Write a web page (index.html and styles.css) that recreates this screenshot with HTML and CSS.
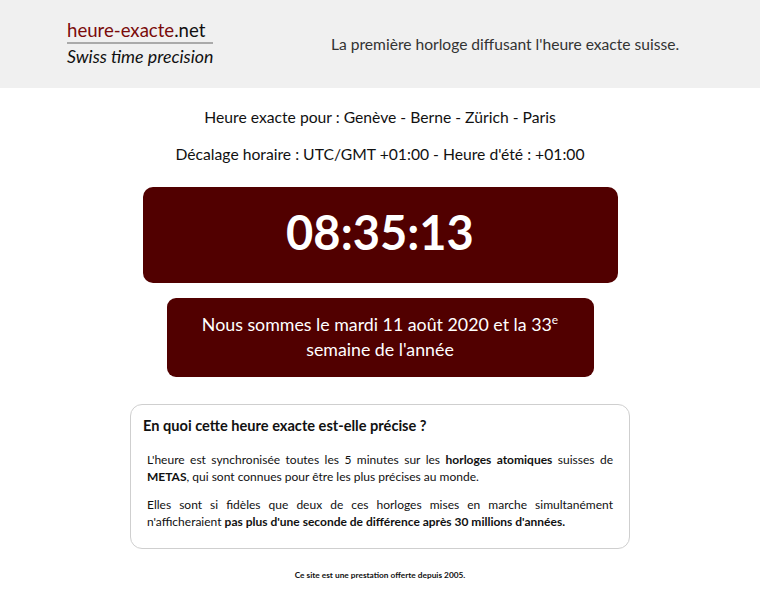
FILE: index.html
```html
<!DOCTYPE html>
<html lang="fr">
<head>
<meta charset="utf-8">
<title>heure-exacte.net</title>
<link rel="stylesheet" href="styles.css">
</head>
<body>
<header class="top">
  <div class="logo">
    <div class="logo-name"><span class="red">heure-exacte</span>.net</div>
    <div class="logo-sub">Swiss time precision</div>
  </div>
  <div class="tagline">La première horloge diffusant l'heure exacte suisse.</div>
</header>
<main class="main">
  <p class="line1">Heure exacte pour : Genève - Berne - Zürich - Paris</p>
  <p class="line2">Décalage horaire : UTC/GMT +01:00 - Heure d'été : +01:00</p>
  <div class="clock">08:35:13</div>
  <div class="date">Nous sommes le mardi 11 août 2020 et la 33<sup>e</sup><br>semaine de l'année</div>
  <section class="info">
    <h2>En quoi cette heure exacte est-elle précise ?</h2>
    <p>L'heure est synchronisée toutes les 5 minutes sur les <b>horloges atomiques</b> suisses de <b>METAS</b>, qui sont connues pour être les plus précises au monde.</p>
    <p>Elles sont si fidèles que deux de ces horloges mises en marche simultanément n'afficheraient <b>pas plus d'une seconde de différence après 30 millions d'années.</b></p>
  </section>
  <footer class="foot">Ce site est une prestation offerte depuis 2005.</footer>
</main>
</body>
</html>
```
FILE: styles.css
```css
html, body { margin: 0; padding: 0; background: #fff; }
body { font-family: Lato, "Open Sans", sans-serif; color: #111; }
.top {
  background: #f0f0f0;
  height: 88px;
  display: flex;
  align-items: center;
  padding-left: 67px;
  box-sizing: border-box;
}
.logo { width: 146px; margin-top: -2px; }
.logo-name {
  font-size: 18.6px;
  line-height: 22px;
  color: #111;
  padding-bottom: 1px;
  border-bottom: 2px solid #aaa;
  white-space: nowrap;
}
.red { color: #7a0a0a; }
.logo-sub {
  font-size: 17.8px;
  font-style: italic;
  line-height: 24px;
  color: #111;
  white-space: nowrap;
}
.tagline {
  margin-left: 118px;
  font-size: 15.6px;
  color: #333;
}
.main {
  display: flex;
  flex-direction: column;
  align-items: center;
}
.line1, .line2 {
  font-size: 15.7px;
  margin: 0;
  line-height: 22px;
}
.line1 { margin-top: 18px; }
.line2 { margin-top: 15px; }
.clock {
  margin-top: 22px;
  width: 475px;
  height: 96px;
  box-sizing: border-box;
  padding-bottom: 6px;
  background: #510000;
  border-radius: 10px;
  color: #fff;
  font-weight: 700;
  font-size: 47px;
  display: flex;
  align-items: center;
  justify-content: center;
}
.date {
  margin-top: 15px;
  width: 427px;
  height: 79px;
  box-sizing: border-box;
  background: #510000;
  border-radius: 9px;
  color: #fff;
  font-size: 17.8px;
  line-height: 25px;
  text-align: center;
  padding-top: 14px;
}
.date sup { font-size: 12px; line-height: 0; vertical-align: 7px; }
.info {
  margin-top: 27px;
  width: 500px;
  box-sizing: border-box;
  border: 1px solid #cfcfcf;
  border-radius: 12px;
  padding: 11px 16px 18px 12px;
}
.info h2 {
  font-size: 14.6px;
  font-weight: 700;
  margin: 0 0 15px 0;
  line-height: 20px;
}
.info p {
  font-size: 12px;
  line-height: 17px;
  margin: 0 0 11px 4px;
  text-align: justify;
}
.info p:last-child { margin-bottom: 0; }
.foot {
  margin-top: 21px;
  font-size: 8.3px;
  font-weight: 700;
  color: #111;
}
```
